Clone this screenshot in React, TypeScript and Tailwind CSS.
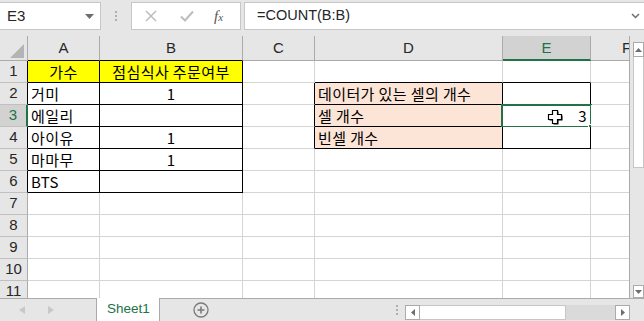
import React from "react";

const COLS = [
  { l: "A", w: "w-[72px]" },
  { l: "B", w: "w-[143px]" },
  { l: "C", w: "w-[72px]" },
  { l: "D", w: "w-[188px]" },
  { l: "E", w: "w-[88px]" },
  { l: "F", w: "w-[72px]" },
];

type Cell = { v: string; align?: "left" | "center" | "right"; bg?: string };

const DATA: Record<string, Cell> = {
  "1-0": { v: "가수", align: "center", bg: "bg-[#ffff00]" },
  "1-1": { v: "점심식사 주문여부", align: "center", bg: "bg-[#ffff00]" },
  "2-0": { v: "거미" },
  "2-1": { v: "1", align: "center" },
  "3-0": { v: "에일리" },
  "4-0": { v: "아이유" },
  "4-1": { v: "1", align: "center" },
  "5-0": { v: "마마무" },
  "5-1": { v: "1", align: "center" },
  "6-0": { v: "BTS" },
  "2-3": { v: "데이터가 있는 셀의 개수", bg: "bg-[#fce4d6]" },
  "3-3": { v: "셀 개수", bg: "bg-[#fce4d6]" },
  "4-3": { v: "빈셀 개수", bg: "bg-[#fce4d6]" },
  "3-4": { v: "3", align: "right" },
};

const inBox = (r: number, c: number) =>
  (r >= 1 && r <= 6 && c >= 0 && c <= 1) || (r >= 2 && r <= 4 && c >= 3 && c <= 4);

function Corner() {
  return (
    <div className="w-[28px] h-[25px] shrink-0 bg-[#e6e6e6] border-r border-b border-[#ababab] relative">
      <svg width="28" height="25" className="absolute left-0 top-0">
        <polygon points="10,22 24,22 24,8" fill="#b4b4b4" />
      </svg>
    </div>
  );
}

function HeaderRow() {
  return (
    <div className="flex h-[25px]">
      <Corner />
      {COLS.map((c, i) => {
        const sel = c.l === "E";
        return (
          <div
            key={c.l}
            className={`${c.w} shrink-0 flex items-center justify-center text-[15px] border-r border-[#ababab] ${
              sel ? "bg-[#d2d2d2] text-[#217346] border-b-2 border-b-[#217346] pt-[2px]" : "bg-[#e6e6e6] text-[#262626] border-b"
            } ${!sel && inBox(1, i) ? "border-b-black" : ""} ${!sel && !inBox(1, i) ? "border-b-[#ababab]" : ""}`}
          >
            {c.l}
          </div>
        );
      })}
    </div>
  );
}

function Cursor() {
  return (
    <svg width="17" height="16" viewBox="0 0 17 16" className="absolute left-[44px] top-[4px]">
      <path d="M5.5 1.5h5v4h4v5h-4v4h-5v-4h-4v-5h4z" fill="#000" transform="translate(1 1)" />
      <path d="M5.5 1.5h5v4h4v5h-4v4h-5v-4h-4v-5h4z" fill="#fff" stroke="#000" strokeWidth="1.2" />
    </svg>
  );
}

function Row({ r }: { r: number }) {
  const selRow = r === 3;
  return (
    <div className="flex h-[22px]">
      <div
        className={`w-[28px] shrink-0 flex items-center justify-center text-[15px] border-b border-b-[#c0c0c0] ${
          selRow ? "bg-[#d2d2d2] text-[#217346] border-r-2 border-r-[#217346]" : "bg-[#e6e6e6] text-[#262626] border-r"
        } ${!selRow && inBox(r, 0) ? "border-r-black" : ""} ${!selRow && !inBox(r, 0) ? "border-r-[#ababab]" : ""}`}
      >
        {r}
      </div>
      {COLS.map((c, i) => {
        const cell = DATA[`${r}-${i}`];
        const rb = inBox(r, i) || inBox(r, i + 1);
        const bb = inBox(r, i) || inBox(r + 1, i);
        const align =
          cell?.align === "center" ? "justify-center" : cell?.align === "right" ? "justify-end pr-[3px]" : "justify-start pl-[3px]";
        const sel = r === 3 && c.l === "E";
        return (
          <div
            key={c.l}
            className={`${c.w} shrink-0 relative flex items-center border-r border-b ${align} ${cell?.bg ?? "bg-white"} ${
              rb ? "border-r-black" : "border-r-[#d4d4d4]"
            } ${bb ? "border-b-black" : "border-b-[#d4d4d4]"}`}
          >
            <span className="text-[15px] leading-none tracking-[0.4px] text-black whitespace-nowrap [font-family:'Noto_Sans_CJK_KR','Liberation_Sans',sans-serif]">
              {cell?.v}
            </span>
            {sel && (
              <>
                <div className="absolute -left-[2px] -top-[1px] w-[91px] h-[24px] border-2 border-[#217346]" />
                <div className="absolute -right-[4px] -bottom-[4px] w-[6px] h-[6px] bg-[#217346] border border-white" />
                <Cursor />
              </>
            )}
          </div>
        );
      })}
    </div>
  );
}

function TopBar() {
  return (
    <div className="h-[30px] flex items-start pt-[2px]">
      <div className="w-[101px] h-[28px] bg-white border border-[#c6c6c6] border-l-0 flex items-center justify-between pl-[7px] pr-[6px]">
        <span className="text-[15px] text-[#262626]">E3</span>
        <svg width="9" height="5" viewBox="0 0 9 5">
          <polygon points="0,0 9,0 4.5,5" fill="#6e6e6e" />
        </svg>
      </div>
      <div className="w-[30px] h-[28px] flex flex-col items-center justify-center gap-[2px]">
        <div className="w-[2px] h-[2px] bg-[#b0b0b0]" />
        <div className="w-[2px] h-[2px] bg-[#b0b0b0]" />
        <div className="w-[2px] h-[2px] bg-[#b0b0b0]" />
      </div>
      <div className="w-[110px] h-[28px] bg-white border border-[#c6c6c6] flex items-center">
        <svg width="12" height="12" viewBox="0 0 12 12" className="ml-[13px]">
          <path d="M1 1L11 11M11 1L1 11" stroke="#bdbdbd" strokeWidth="1.5" />
        </svg>
        <svg width="14" height="12" viewBox="0 0 14 12" className="ml-[23px]">
          <path d="M1 6.5L5 10.5L13 1.5" stroke="#bdbdbd" strokeWidth="2" fill="none" />
        </svg>
        <span className="ml-[20px] text-[15px] italic text-[#555] [font-family:'Liberation_Serif',serif]">
          f<span className="text-[11px]">x</span>
        </span>
      </div>
      <div className="ml-[3px] flex-1 h-[28px] bg-white border border-[#c6c6c6] border-r-0 flex items-center justify-between pl-[12px] pr-[4px]">
        <span className="text-[14.5px] text-[#262626]">=COUNT(B:B)</span>
        <svg width="9" height="6" viewBox="0 0 9 6">
          <path d="M1 1L4.5 4.5L8 1" stroke="#6e6e6e" strokeWidth="1.5" fill="none" />
        </svg>
      </div>
    </div>
  );
}

function VScroll() {
  return (
    <div className="w-[14px] h-full bg-[#e6e6e6] flex flex-col pt-[6px] pl-[3px]">
      <div className="h-[15px] bg-white border border-[#ababab] flex items-center justify-center">
        <svg width="7" height="4" viewBox="0 0 7 4">
          <polygon points="0,4 7,4 3.5,0" fill="#6e6e6e" />
        </svg>
      </div>
      <div className="h-[111px] bg-white border border-t-0 border-[#c6c6c6]" />
      <div className="flex-1 bg-[#e6e6e6]" />
      <div className="h-[13px] bg-white border border-[#ababab] flex items-center justify-center">
        <svg width="7" height="4" viewBox="0 0 7 4">
          <polygon points="0,0 7,0 3.5,4" fill="#6e6e6e" />
        </svg>
      </div>
    </div>
  );
}

function TabBar() {
  return (
    <div className="h-[23px] flex items-stretch bg-[#e6e6e6] border-t border-[#ababab]">
      <div className="w-[96px] flex items-center">
        <svg width="6" height="8" viewBox="0 0 6 8" className="ml-[19px]">
          <polygon points="6,0 6,8 0,4" fill="#c8c8c8" />
        </svg>
        <svg width="6" height="8" viewBox="0 0 6 8" className="ml-[23px]">
          <polygon points="0,0 0,8 6,4" fill="#c8c8c8" />
        </svg>
      </div>
      <div className="w-[64px] -mt-px bg-white border-x border-[#ababab] flex items-center pl-[10px]">
        <span className="text-[13.5px] text-[#217346]">Sheet1</span>
      </div>
      <div className="w-[228px] flex items-center pl-[33px]">
        <svg width="16" height="16" viewBox="0 0 16 16">
          <circle cx="8" cy="8" r="7" stroke="#7a7a7a" strokeWidth="1.3" fill="none" />
          <path d="M8 4.5V11.5M4.5 8H11.5" stroke="#7a7a7a" strokeWidth="1.6" />
        </svg>
      </div>
      <div className="w-[17px] flex flex-col items-center justify-center gap-[2px]">
        <div className="w-[2px] h-[2px] bg-[#b0b0b0]" />
        <div className="w-[2px] h-[2px] bg-[#b0b0b0]" />
        <div className="w-[2px] h-[2px] bg-[#b0b0b0]" />
      </div>
      <div className="w-[225px] mt-[6px] h-[15px] flex bg-[#dadada]">
        <div className="w-[15px] bg-white border border-[#ababab] flex items-center justify-center">
          <svg width="4" height="7" viewBox="0 0 4 7">
            <polygon points="4,0 4,7 0,3.5" fill="#6e6e6e" />
          </svg>
        </div>
        <div className="w-[146px] bg-white border border-l-0 border-[#c6c6c6]" />
        <div className="flex-1" />
        <div className="w-[15px] bg-white border border-[#ababab] flex items-center justify-center">
          <svg width="4" height="7" viewBox="0 0 4 7">
            <polygon points="0,0 0,7 4,3.5" fill="#6e6e6e" />
          </svg>
        </div>
      </div>
    </div>
  );
}

export default function App() {
  return (
    <div className="w-[644px] h-[321px] overflow-hidden bg-[#e6e6e6] flex flex-col [font-family:'Liberation_Sans','Noto_Sans_CJK_KR',sans-serif]">
      <TopBar />
      <div className="h-[6px]" />
      <div className="h-[262px] flex">
        <div className="w-[630px] h-full overflow-hidden border-r border-[#ababab] bg-white">
          <HeaderRow />
          {Array.from({ length: 11 }, (_, i) => (
            <Row key={i} r={i + 1} />
          ))}
        </div>
        <VScroll />
      </div>
      <TabBar />
    </div>
  );
}
